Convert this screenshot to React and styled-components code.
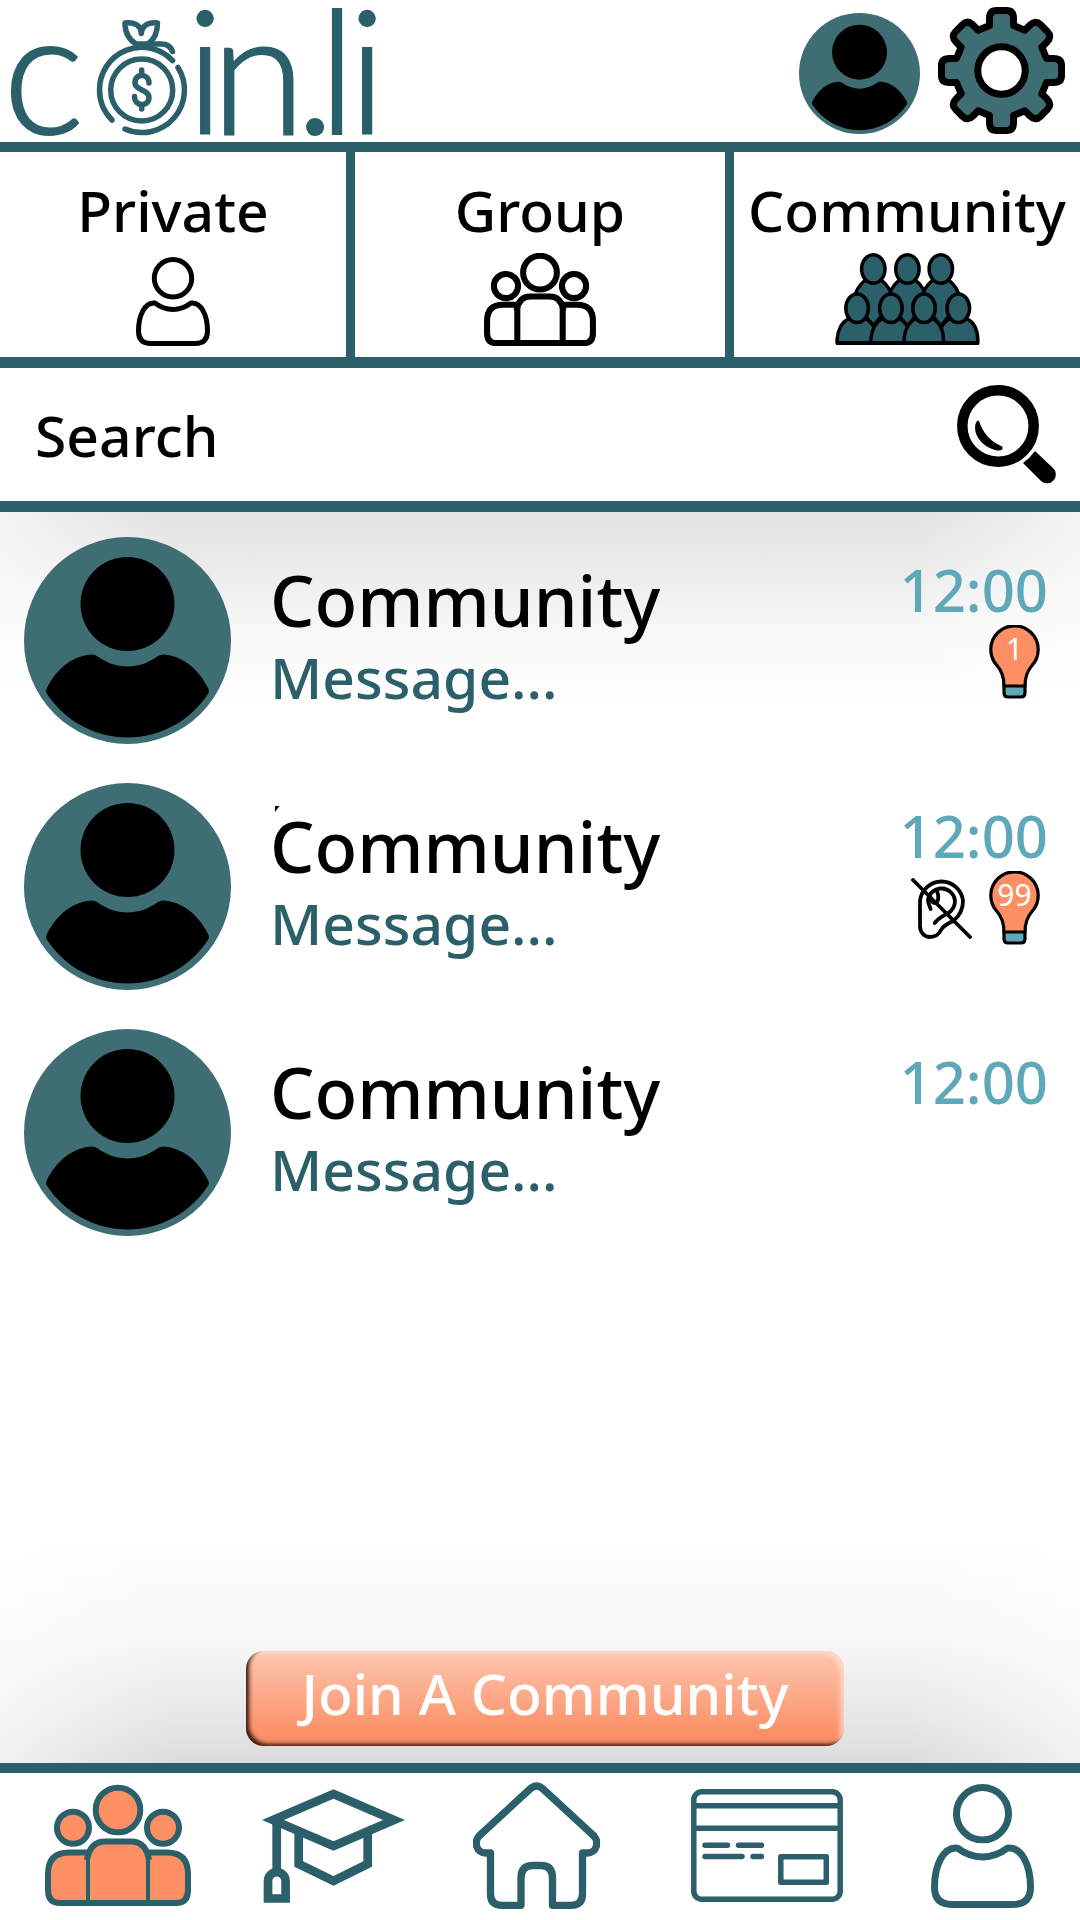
import React from "react";
import styled, { createGlobalStyle } from "styled-components";

const color = {
  teal: "#2b606b",
  slate: "#3e6d74",
  sky: "#5fa8ba",
  orange: "#fc8f64",
};

const GlobalStyle = createGlobalStyle`
  *, *::before, *::after { box-sizing: border-box; }
  body {
    margin: 0;
    background: #fff;
    color: #000;
    font-family: "Noto Sans", "Open Sans", sans-serif;
    font-weight: 500;
  }
  button, input { font: inherit; color: inherit; }
  svg { display: block; flex: none; }
`;

const Page = styled.div`
  min-height: 100vh;
  display: flex;
  flex-direction: column;
`;

const Header = styled.header`
  height: 152px;
  padding: 0 15px 8px 0;
  border-bottom: 10px solid ${color.teal};
  display: flex;
  align-items: flex-end;
  justify-content: space-between;
`;

const Brand = styled.h1`
  margin: 0;
`;

const LogoSvg = styled.svg`
  overflow: visible;
`;

const LogoText = styled.text`
  fill: ${color.teal};
  stroke: ${color.teal};
  stroke-width: 2px;
  font-family: Lato, sans-serif;
  font-size: 172px;
  font-weight: 300;
`;

const HeaderActions = styled.div`
  display: flex;
  align-items: flex-end;
  gap: 18px;
`;

const IconButton = styled.button`
  padding: 0;
  border: 0;
  background: none;
  cursor: pointer;
`;

const Tabs = styled.nav`
  display: grid;
  grid-template-columns: 346fr 370fr 346fr;
  gap: 9px;
  background: ${color.teal};
  border-bottom: 11px solid ${color.teal};
`;

const Tab = styled.button`
  height: 205px;
  padding: 28px 0 11px;
  border: 0;
  background: #fff;
  display: flex;
  flex-direction: column;
  align-items: center;
  justify-content: space-between;
  font-size: 57px;
  line-height: 60px;
  cursor: pointer;
`;

const SearchBar = styled.form`
  height: 144px;
  padding: 0 24px 0 35px;
  border-bottom: 11px solid ${color.teal};
  display: flex;
  align-items: center;
`;

const SearchInput = styled.input`
  flex: 1;
  min-width: 0;
  padding: 0;
  border: 0;
  outline: 0;
  background: none;
  font-size: 57px;
  &::placeholder { color: #000; opacity: 1; }
`;

const Main = styled.main`
  flex: 1;
  display: flex;
  flex-direction: column;
  justify-content: space-between;
  padding: 25px 0 17px;
  background:
    linear-gradient(to right, rgba(255, 255, 255, 0.6), rgba(255, 255, 255, 0) 16%, rgba(255, 255, 255, 0) 84%, rgba(255, 255, 255, 0.6)),
    linear-gradient(to bottom, #e2e2e2, #ececec 60px, #fafafa 130px, #fff 210px, #fff calc(100% - 240px), #f8f8f8 calc(100% - 130px), #e6e6e6 calc(100% - 40px), #dcdcdc);
`;

const ChatList = styled.ul`
  margin: 0;
  padding: 0;
  list-style: none;
  display: flex;
  flex-direction: column;
  gap: 39px;
`;

const ChatRow = styled.li`
  display: flex;
  gap: 39px;
  padding: 0 32px 0 24px;
`;

const ChatText = styled.div`
  position: relative;
  flex: 1;
  padding-top: 23px;
  display: flex;
  flex-direction: column;
  gap: 7px;
`;

const Fleck = styled.svg`
  position: absolute;
  left: 5px;
  top: 23px;
`;

const ChatTitle = styled.h2`
  margin: 0;
  font-size: 70px;
  font-weight: inherit;
  line-height: 80px;
`;

const Preview = styled.p`
  margin: 0;
  color: ${color.teal};
  font-size: 57px;
  line-height: 60px;
`;

const ChatMeta = styled.div`
  padding-top: 23px;
  display: flex;
  flex-direction: column;
  align-items: flex-end;
  gap: 5px;
`;

const Time = styled.time`
  color: ${color.sky};
  font-size: 58px;
  line-height: 60px;
`;

const Badges = styled.div`
  display: flex;
  align-items: center;
  gap: 17px;
  padding-right: 8px;
`;

const Unread = styled.span`
  display: grid;
  justify-items: center;
  > * { grid-area: 1 / 1; }
`;

const UnreadCount = styled.span`
  padding-top: 4px;
  color: #fff;
  font-size: 30px;
  font-weight: 400;
  line-height: 40px;
`;

const JoinArea = styled.div`
  padding: 0 236px 0 246px;
`;

const JoinButton = styled.button`
  width: 100%;
  height: 95px;
  padding: 0 0 12px;
  border: 0;
  border-radius: 18px;
  background: linear-gradient(#fdc6b0, #fb8e64 90%);
  box-shadow:
    inset 4px -3px 4px -1px rgba(40, 14, 4, 0.95),
    inset -5px 4px 5px -1px rgba(255, 226, 215, 0.7);
  color: #fff;
  font-size: 57px;
  line-height: 60px;
  white-space: nowrap;
  cursor: pointer;
`;

const BottomNav = styled.nav`
  height: 157px;
  border-top: 10px solid ${color.teal};
  padding: 0 6px 2px 0;
  display: grid;
  grid-template-columns: 236fr 194fr 213fr 248fr 183fr;
  align-items: center;
  justify-items: center;
`;

const NavLink = styled.a`
  display: block;
`;

function Logo() {
  return (
    <LogoSvg width="384" height="134" viewBox="0 0 384 134" role="img" aria-label="coin.li">
      <LogoText x="3" y="134">c</LogoText>
      <g fill="none" stroke={color.teal} strokeWidth="5.500" strokeLinecap="round" strokeLinejoin="round">
        <circle cx="141.700" cy="90" r="31" />
        <path d="M112 120A42.500 42.500 0 0 1 99.500 90A42.300 42.300 0 0 1 172.500 60.500" />
        <path d="M178 67.500A42.500 42.500 0 0 1 125 129" />
        <path d="M136 44C128 39 125 31 125 23C134 22 141 25 141.300 33.500C142 25 149 22 157.500 23C157.500 31 155 39 148 44" />
        <path d="M136 44H161Q170 44 172.500 51.500" />
        <path d="M149 83C149 73 135 73 135 82.500C135 91 149 89 149 97.500C149 107 134.500 107 134.500 96.500M141.700 70V75M141.700 105V109" />
      </g>
      <LogoText x="186 211 295 318 348" y="134">in.li</LogoText>
    </LogoSvg>
  );
}

function Avatar({ size }) {
  return (
    <svg width={size} height={size} viewBox="0 0 207 207" aria-hidden="true">
      <circle cx="103.500" cy="103.500" r="103.500" fill={color.slate} />
      <circle cx="103.500" cy="67" r="47" />
      <path d="M22.500 156Q21.500 154 23 151C33 131 49 119 67 117.500Q70 117 73 119C92 133 115 133 134 119Q137 117 140 117.500C158 119 174 131 184 151Q185.500 154 184.500 156A96 96 0 0 1 22.500 156Z" />
    </svg>
  );
}

// One outline of eight identical teeth, each turned 45 degrees from the last.
const gearOutline = (() => {
  const parts = [];
  for (let k = 0; k < 8; k += 1) {
    const a = (k * Math.PI) / 4;
    const p = (x, y) =>
      `${(63.5 + x * Math.cos(a) - y * Math.sin(a)).toFixed(2)} ${(63.5 + x * Math.sin(a) + y * Math.cos(a)).toFixed(2)}`;
    parts.push(
      `${k ? "L" : "M"}${p(-12, -45)}L${p(-12, -52)}Q${p(-12, -60)} ${p(-5, -60)}L${p(5, -60)}Q${p(12, -60)} ${p(12, -52)}L${p(12, -45)}`
    );
  }
  return `${parts.join("")}Z`;
})();

function Gear() {
  return (
    <svg width="127" height="127" viewBox="0 0 127 127" fill={color.slate} stroke="#000" strokeWidth="7" strokeLinejoin="round" aria-hidden="true">
      <path d={gearOutline} />
      <circle cx="63.500" cy="63.500" r="23.700" fill="#fff" />
    </svg>
  );
}

function PersonIcon({ width, height, stroke }) {
  return (
    <svg width={width} height={height} viewBox="0 0 74 89" fill="none" stroke={stroke} strokeWidth="5" strokeLinejoin="round" aria-hidden="true">
      <ellipse cx="37" cy="21.300" rx="18.700" ry="18.800" />
      <path d="M19 46C9 45 2.500 58 2.500 74Q2.500 86.500 15 86.500H59Q71.500 86.500 71.500 74C71.500 58 65 45 55 46C44 54.500 30 54.500 19 46Z" />
    </svg>
  );
}

function GroupIcon({ width, height, stroke, fill, weight, divider }) {
  return (
    <svg width={width} height={height} viewBox="0 0 148 123" fill={fill} stroke={stroke} strokeWidth={weight} aria-hidden="true">
      <circle cx="29" cy="43.700" r="16" />
      <circle cx="119" cy="43.700" r="16" />
      <circle cx="74" cy="26" r="22.300" />
      <path d="M44 68.500H25Q4 68.500 4 90V106Q4 119 16 119H132Q144 119 144 106V90Q144 68.500 123 68.500H104" />
      <path stroke="none" d="M44 114V75Q44 57.500 61 57.500H87Q104 57.500 104 75V114Z" />
      <path fill="none" strokeWidth={divider} d="M44 118V72M104 118V72" />
      <path fill="none" d="M43 76Q46 57.500 61 57.500H87Q102 57.500 105 76" />
    </svg>
  );
}

function CrowdIcon() {
  return (
    <svg width="145" height="93" viewBox="0 0 145 93" fill={color.teal} stroke="#000" strokeWidth="3.500" strokeLinejoin="round" aria-hidden="true">
      {[72.4, 38.3, 105.8].map((x) => (
        <path key={x} d={`M${x - 20} 48C${x - 18} 36 ${x - 13} 31 ${x - 8} 27H${x + 8}C${x + 13} 31 ${x + 18} 36 ${x + 20} 48L${x} 73Z`} />
      ))}
      {[38.3, 72.4, 105.8].map((x) => (
        <ellipse key={x} cx={x} cy="16" rx="11.700" ry="14.200" />
      ))}
      {[123.3, 22.1, 55.9, 89].map((x) => (
        <path key={x} d={`M${x - 20} 90V86C${x - 19} 76 ${x - 15} 69 ${x - 9} 66H${x + 9}C${x + 15} 69 ${x + 19} 76 ${x + 19.5} 86V90Z`} />
      ))}
      {[22.1, 55.9, 89, 123.3].map((x) => (
        <ellipse key={x} cx={x} cy="55.300" rx="11.300" ry="14.300" />
      ))}
      <path strokeWidth="4" d="M1 90H144" />
    </svg>
  );
}

function SearchIcon() {
  return (
    <svg width="99" height="99" viewBox="0 0 99 99" aria-hidden="true">
      <circle cx="41" cy="41" r="35.700" fill="none" stroke="#000" strokeWidth="10.500" />
      <path d="M78 66Q73 73 66 78L84 96A8.600 8.600 0 0 0 96 83Z" />
      <path d="M22 36C26 48 33 56 45 61.500C47 64 44 66 40 65.500C25 62 16 50 18.500 39Q20 34 22 36Z" />
    </svg>
  );
}

function BulbIcon() {
  return (
    <svg width="51" height="74" viewBox="0 0 51 74" stroke="#000" strokeWidth="3.200" strokeLinejoin="round" aria-hidden="true">
      <path fill={color.sky} d="M15 60V68Q15 72 19 72H32Q36 72 36 68V60Z" />
      <path fill={color.orange} d="M15 61C15 50 12 45 8 40.500A23.700 23.700 0 1 1 43 40.500C39 45 36 50 36 61Z" />
    </svg>
  );
}

function MutedIcon() {
  return (
    <svg width="61" height="61" viewBox="0 0 61 61" fill="none" stroke="#000" strokeWidth="3.800" strokeLinecap="round" role="img" aria-label="Muted">
      <path d="M9 23A21.600 21.600 0 0 1 52 23C52 35 46 40 42 43C36 46 32 48 30 52C27 58 23 59 19 59C13 59 9 54 9 48Z" />
      <path d="M19.700 31C18 27 17 25 17 22A13.600 13.600 0 0 1 44 23C44 29 41 33 36 36C31 38 27 41 23.700 45" />
      <path d="M26 13C28 18 28 24 24 25C20 25 19 21 18 19" />
      <path d="M2 2L59 59" />
    </svg>
  );
}

function GraduationIcon() {
  return (
    <svg width="143" height="114" viewBox="0 0 143 114" fill="none" stroke={color.teal} strokeWidth="8.700" aria-hidden="true">
      <path d="M11 31L71.500 5L132 31L71.500 57Z" strokeMiterlimit="10" />
      <path d="M36.700 44V75L71.500 92L105.700 75V44" />
      <path d="M14.700 33V82" />
      <path d="M6 109.500V92A8.800 8.800 0 0 1 23.600 92V109.500Z" />
    </svg>
  );
}

function HomeIcon() {
  return (
    <svg width="127" height="127" viewBox="0 0 127 127" fill="none" stroke={color.teal} strokeWidth="7.300" strokeLinejoin="round" aria-hidden="true">
      <path d="M17.500 71H13C3 71 1 60 6 54L57 7Q63.500 1 70 7L121 54C126 60 124 71 114 71H109.500V112Q109.500 123.300 98 123.300H79.500V96Q79.500 83.500 68 83.500H60Q48 83.500 48 96V123.300H29Q17.500 123.300 17.500 112Z" />
    </svg>
  );
}

function CardIcon() {
  return (
    <svg width="152" height="113" viewBox="0 0 152 113" fill="none" stroke={color.teal} strokeWidth="5.500" aria-hidden="true">
      <rect x="2.800" y="2.800" width="146.400" height="107.400" rx="8" />
      <path d="M3 16.800H149M3 39.300H149" />
      <path strokeLinecap="round" d="M14 56.300H36.500M47.500 56.300H70.500M14 67.500H51M62 67.500H70.500" />
      <rect x="89.800" y="67.800" width="45.500" height="25.500" strokeLinejoin="round" />
    </svg>
  );
}

const chats = [
  { id: 1, unread: 1 },
  { id: 2, unread: 99, muted: true, fleck: true },
  { id: 3 },
];

function Chat({ unread, muted, fleck }) {
  return (
    <ChatRow>
      <Avatar size={207} />
      <ChatText>
        {fleck && (
          <Fleck width="5" height="6" viewBox="0 0 5 6" aria-hidden="true">
            <path d="M0 0H4.500L0 6Z" />
          </Fleck>
        )}
        <ChatTitle>Community</ChatTitle>
        <Preview>Message...</Preview>
      </ChatText>
      <ChatMeta>
        <Time>12:00</Time>
        <Badges>
          {muted && <MutedIcon />}
          {unread && (
            <Unread>
              <BulbIcon />
              <UnreadCount>{unread}</UnreadCount>
            </Unread>
          )}
        </Badges>
      </ChatMeta>
    </ChatRow>
  );
}

export default function App() {
  return (
    <>
      <GlobalStyle />
      <Page>
        <Header>
          <Brand>
            <Logo />
          </Brand>
          <HeaderActions>
            <IconButton type="button" aria-label="Account">
              <Avatar size={121} />
            </IconButton>
            <IconButton type="button" aria-label="Settings">
              <Gear />
            </IconButton>
          </HeaderActions>
        </Header>

        <Tabs aria-label="Chat types">
          <Tab type="button">
            Private
            <PersonIcon width={74} height={89} stroke="#000" />
          </Tab>
          <Tab type="button">
            Group
            <GroupIcon width={112} height={93} stroke="#000" fill="#fff" weight={8} divider={8} />
          </Tab>
          <Tab type="button" aria-current="page">
            Community
            <CrowdIcon />
          </Tab>
        </Tabs>

        <SearchBar role="search" onSubmit={(e) => e.preventDefault()}>
          <SearchInput type="text" placeholder="Search" aria-label="Search" />
          <IconButton type="submit" aria-label="Submit search">
            <SearchIcon />
          </IconButton>
        </SearchBar>

        <Main>
          <ChatList>
            {chats.map((chat) => (
              <Chat key={chat.id} {...chat} />
            ))}
          </ChatList>
          <JoinArea>
            <JoinButton type="button">Join A Community</JoinButton>
          </JoinArea>
        </Main>

        <BottomNav aria-label="Main">
          <NavLink href="#chats" aria-label="Chats" aria-current="page">
            <GroupIcon width={148} height={123} stroke={color.teal} fill={color.orange} weight={6} divider={4} />
          </NavLink>
          <NavLink href="#learn" aria-label="Learn">
            <GraduationIcon />
          </NavLink>
          <NavLink href="#home" aria-label="Home">
            <HomeIcon />
          </NavLink>
          <NavLink href="#cards" aria-label="Cards">
            <CardIcon />
          </NavLink>
          <NavLink href="#profile" aria-label="Profile">
            <PersonIcon width={103} height={124} stroke={color.teal} />
          </NavLink>
        </BottomNav>
      </Page>
    </>
  );
}
